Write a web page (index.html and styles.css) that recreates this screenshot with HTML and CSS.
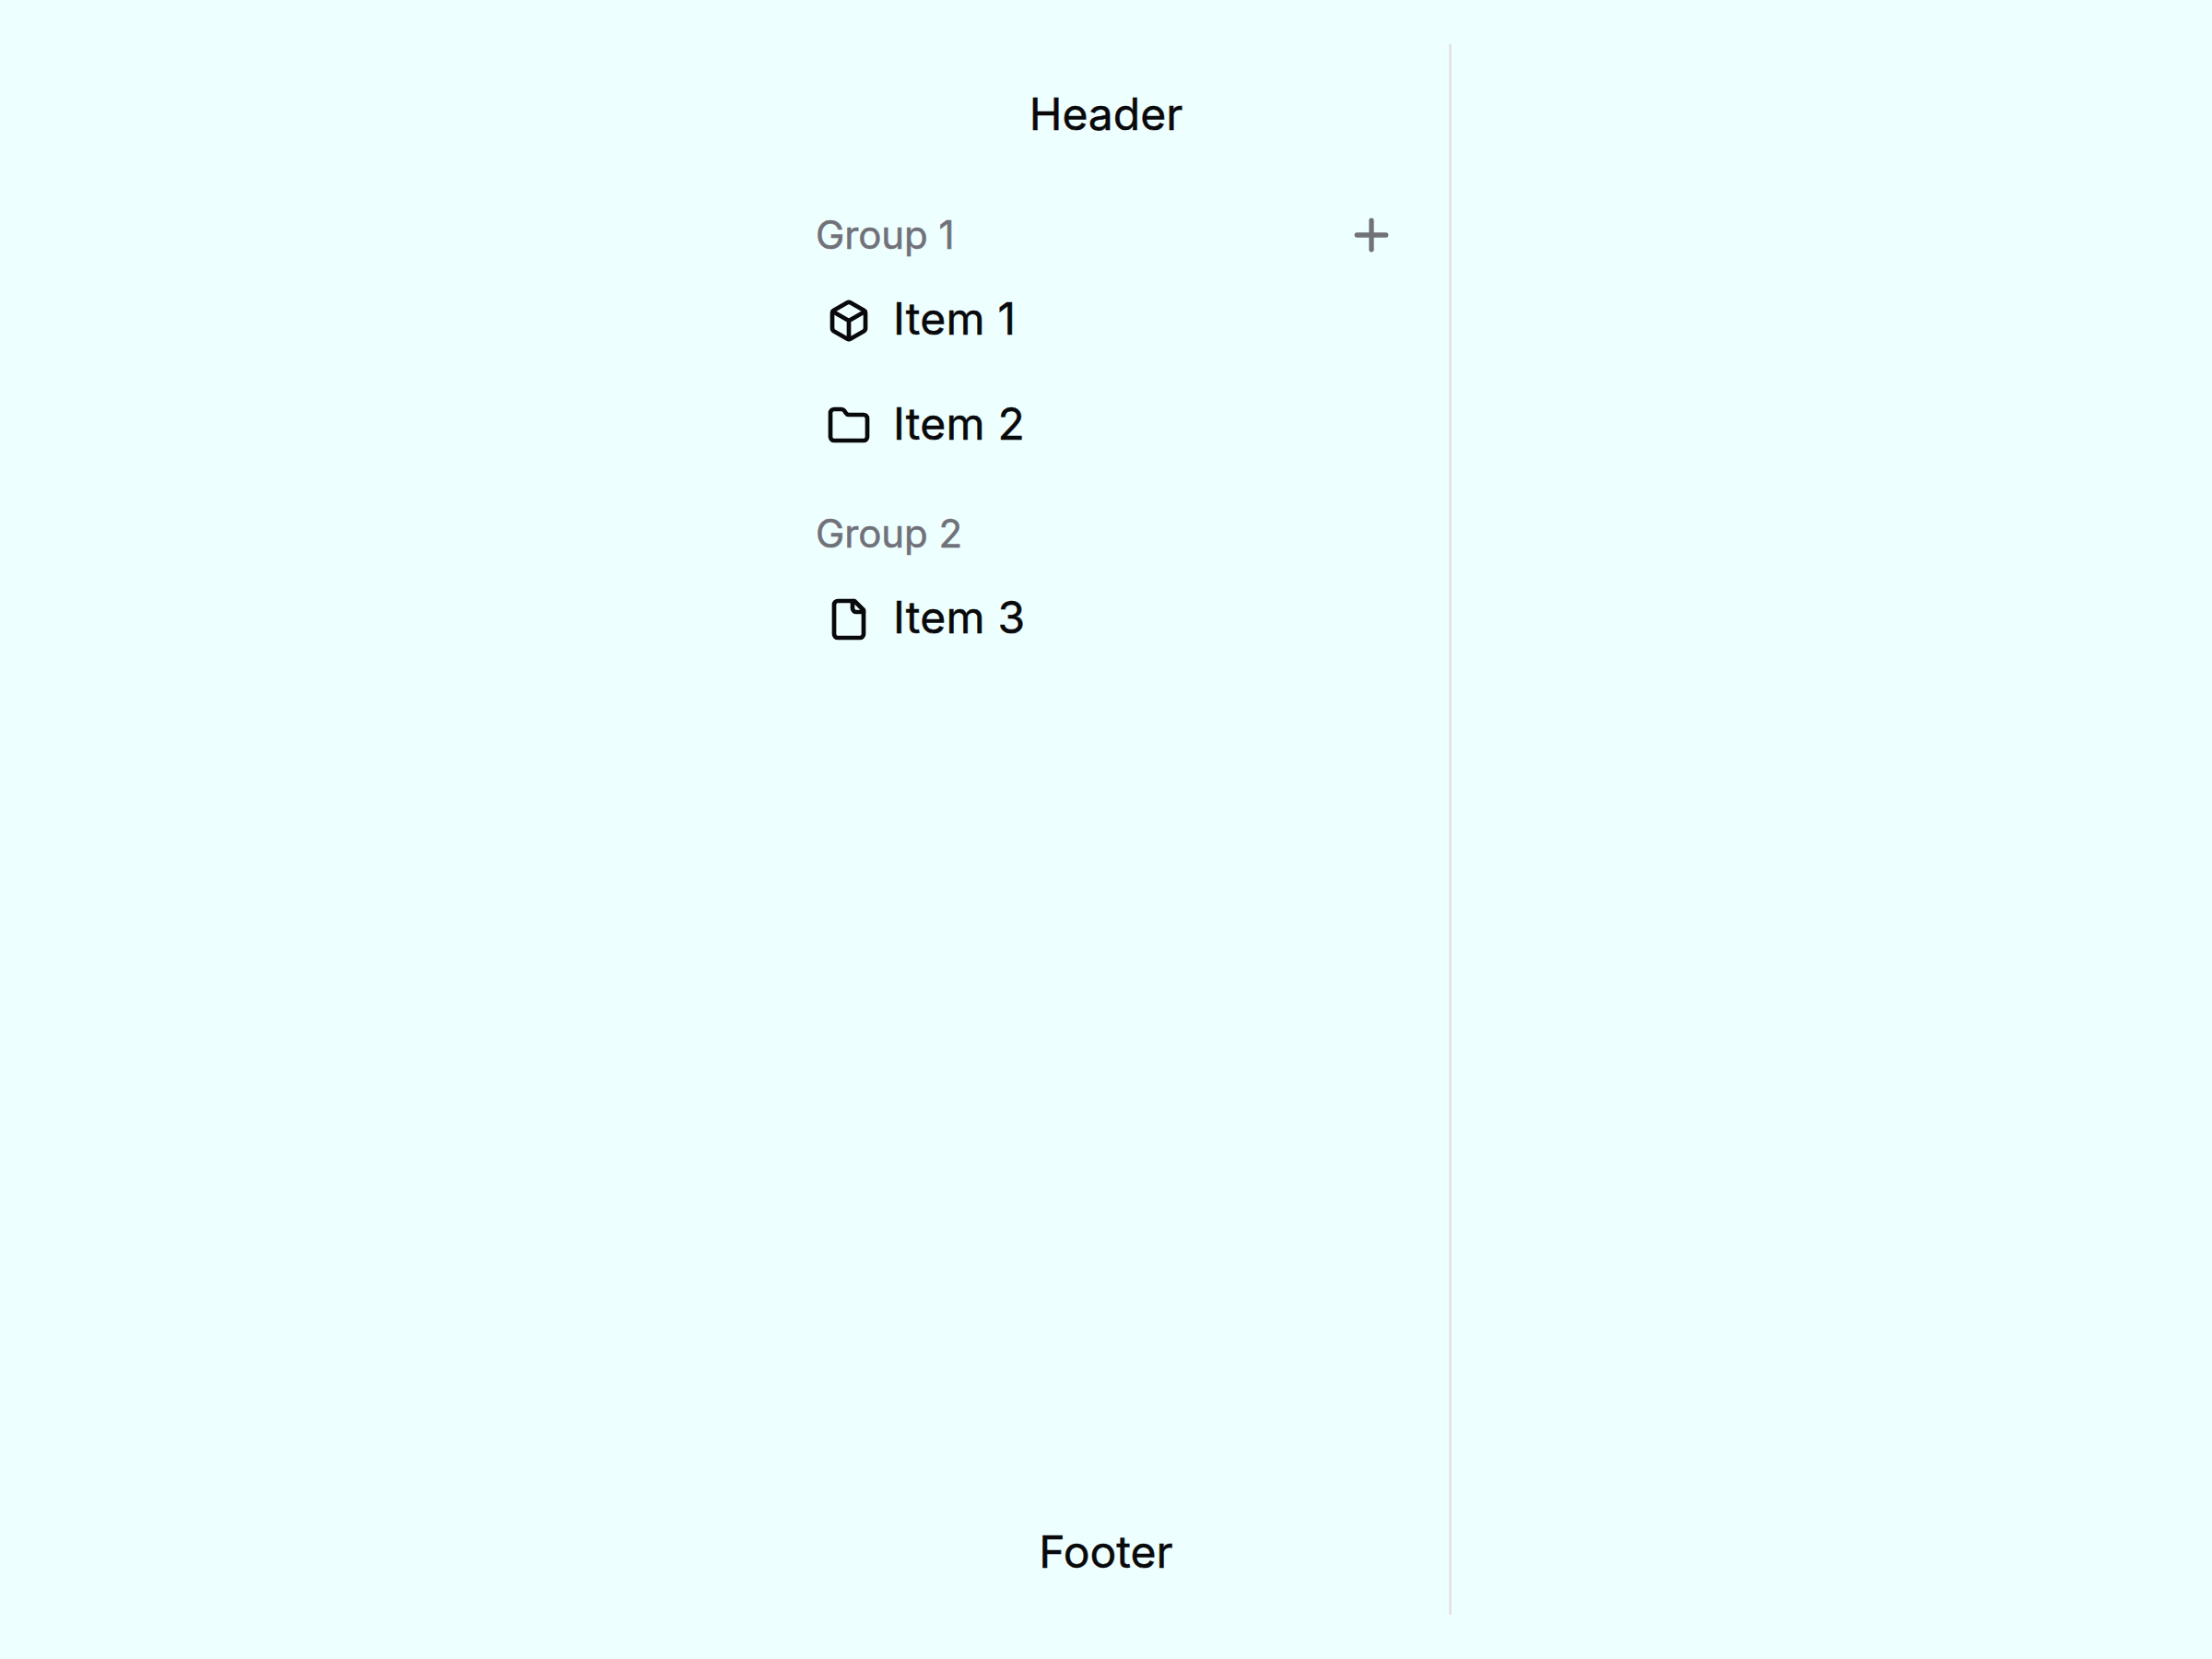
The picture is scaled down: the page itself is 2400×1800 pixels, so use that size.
FILE: index.html
```html
<!DOCTYPE html>
<html lang="en">
<head>
<meta charset="utf-8">
<title>Sidebar</title>
<link rel="stylesheet" href="styles.css">
</head>
<body>
<aside class="sidebar">
  <header class="sidebar-header">Header</header>
  <nav class="sidebar-content">
    <section class="group">
      <div class="group-label"><span>Group 1</span>
        <button class="group-action" aria-label="Add"><svg class="icon icon-plus" viewBox="0 0 24 24"><path d="M5 12h14M12 5v14"/></svg></button>
      </div>
      <ul class="menu">
        <li class="item"><svg class="icon" viewBox="0 0 24 24"><path d="M21 8a2 2 0 0 0-1-1.73l-7-4a2 2 0 0 0-2 0l-7 4A2 2 0 0 0 3 8v8a2 2 0 0 0 1 1.73l7 4a2 2 0 0 0 2 0l7-4A2 2 0 0 0 21 16Z"/><path d="m3.3 7 8.7 5 8.7-5M12 22V12"/></svg><span class="item-label">Item 1</span></li>
        <li class="item"><svg class="icon" viewBox="0 0 24 24"><path d="M20 20a2 2 0 0 0 2-2V8a2 2 0 0 0-2-2h-7.9a2 2 0 0 1-1.69-.9L9.6 3.9A2 2 0 0 0 7.93 3H4a2 2 0 0 0-2 2v13a2 2 0 0 0 2 2Z"/></svg><span class="item-label">Item 2</span></li>
      </ul>
    </section>
    <section class="group">
      <div class="group-label"><span>Group 2</span></div>
      <ul class="menu">
        <li class="item"><svg class="icon" viewBox="0 0 24 24"><path d="M15 2H6a2 2 0 0 0-2 2v16a2 2 0 0 0 2 2h12a2 2 0 0 0 2-2V7Z"/><path d="M14 2v4a2 2 0 0 0 2 2h4"/></svg><span class="item-label">Item 3</span></li>
      </ul>
    </section>
  </nav>
  <footer class="sidebar-footer">Footer</footer>
</aside>
</body>
</html>
```
FILE: styles.css
```css
* { box-sizing: border-box; }

body {
  margin: 0;
  height: 1800px;
  padding: 48px 0;
  display: flex;
  justify-content: center;
  background: #eff;
  color: #09090b;
  font-family: Inter, sans-serif;
  font-size: 48px;
  line-height: 72px;
  -webkit-text-stroke: 0.5px currentColor;
}

.sidebar {
  width: 750px;
  display: flex;
  flex-direction: column;
  border-right: 3px solid #e4e4e7;
}

.sidebar-header,
.sidebar-footer {
  padding: 40px 0 32px 3px;
  text-align: center;
}

.sidebar-content {
  flex: 1;
  padding: 15px 48px;
}

.group {
  margin-bottom: 21.5px;
}

.group-label {
  display: flex;
  align-items: center;
  justify-content: space-between;
  height: 96px;
  padding: 0 9px 0 12px;
  color: #71717a;
  font-size: 42px;
  letter-spacing: -0.1px;
}

.group-action {
  display: flex;
  padding: 0;
  border: 0;
  background: none;
  color: inherit;
}

.menu {
  list-style: none;
  margin: -3.5px 0 0;
  padding: 0;
}

.item {
  display: flex;
  align-items: center;
  gap: 24px;
  height: 96px;
  margin-bottom: 18px;
  padding: 0 24px;
}

.item:last-child {
  margin-bottom: 0;
}

.item-label {
  padding-bottom: 3px;
  letter-spacing: 0.25px;
}

.icon {
  width: 48px;
  height: 48px;
  fill: none;
  stroke: currentColor;
  stroke-width: 2.35;
  stroke-linecap: round;
  stroke-linejoin: round;
}

.icon-plus {
  width: 54px;
  height: 54px;
}
```
